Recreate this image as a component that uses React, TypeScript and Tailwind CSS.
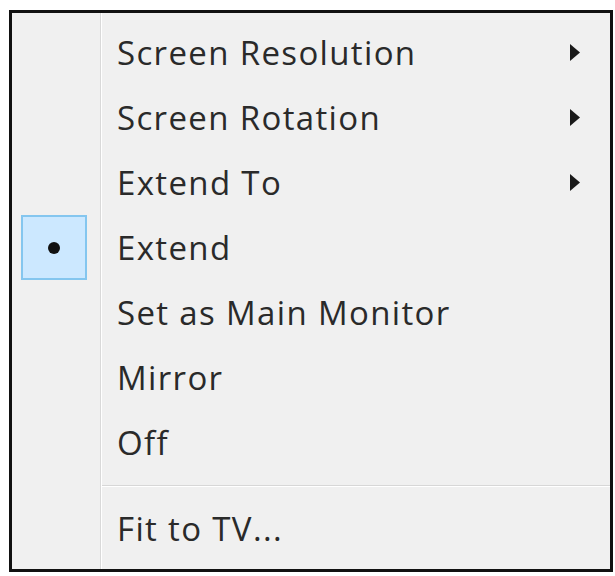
import React from 'react'

type Item = { label: string; sub?: boolean; checked?: boolean }

const items: Item[] = [
    { label: 'Screen Resolution', sub: true },
    { label: 'Screen Rotation', sub: true },
    { label: 'Extend To', sub: true },
    { label: 'Extend', checked: true },
    { label: 'Set as Main Monitor' },
    { label: 'Mirror' },
    { label: 'Off' },
]

export default function App() {
    return (
        <div className="w-[615px] h-[576px] bg-white pt-[10px] pl-[9px]">
            <div
                className="w-[604px] h-[562px] border-[3px] border-[#111] bg-[#f0f0f0] flex text-[#2a2a2a]"
                style={{ fontFamily: '"Open Sans", "Noto Sans", sans-serif' }}
            >
                {/* Gutter */}
                <div className="w-[89px] shrink-0 border-r border-[#d9d9d9] pt-[7px]">
                    {items.map((item) => (
                        <div key={item.label} className="h-[65px] pl-[9px]">
                            {item.checked && (
                                <div className="w-[66px] h-[65px] bg-[#cce8ff] border-2 border-[#84c6ef] flex items-center justify-center">
                                    <div className="w-[12px] h-[12px] rounded-full bg-[#111]" />
                                </div>
                            )}
                        </div>
                    ))}
                </div>
                <div className="w-px shrink-0 bg-white" />

                {/* Items */}
                <div className="flex-1 flex flex-col pt-[7px]">
                    {items.map((item) => (
                        <MenuRow key={item.label} label={item.label} sub={item.sub} />
                    ))}
                    <div className="mt-[10px] mb-[9px]">
                        <div className="h-px bg-[#d7d7d7]" />
                        <div className="h-px bg-white" />
                    </div>
                    <MenuRow label="Fit to TV..." />
                </div>
            </div>
        </div>
    )
}

function MenuRow({ label, sub }: { label: string; sub?: boolean }) {
    return (
        <div className="h-[65px] flex items-center pl-[15px] pr-[30px]">
            <span className="flex-1 text-[33px] leading-none tracking-[1.35px]">{label}</span>
            {sub && (
                <svg width="11" height="17" viewBox="0 0 11 17" className="shrink-0">
                    <path d="M1 0 L11 8.5 L1 17 Z" fill="#1a1a1a" />
                </svg>
            )}
        </div>
    )
}
